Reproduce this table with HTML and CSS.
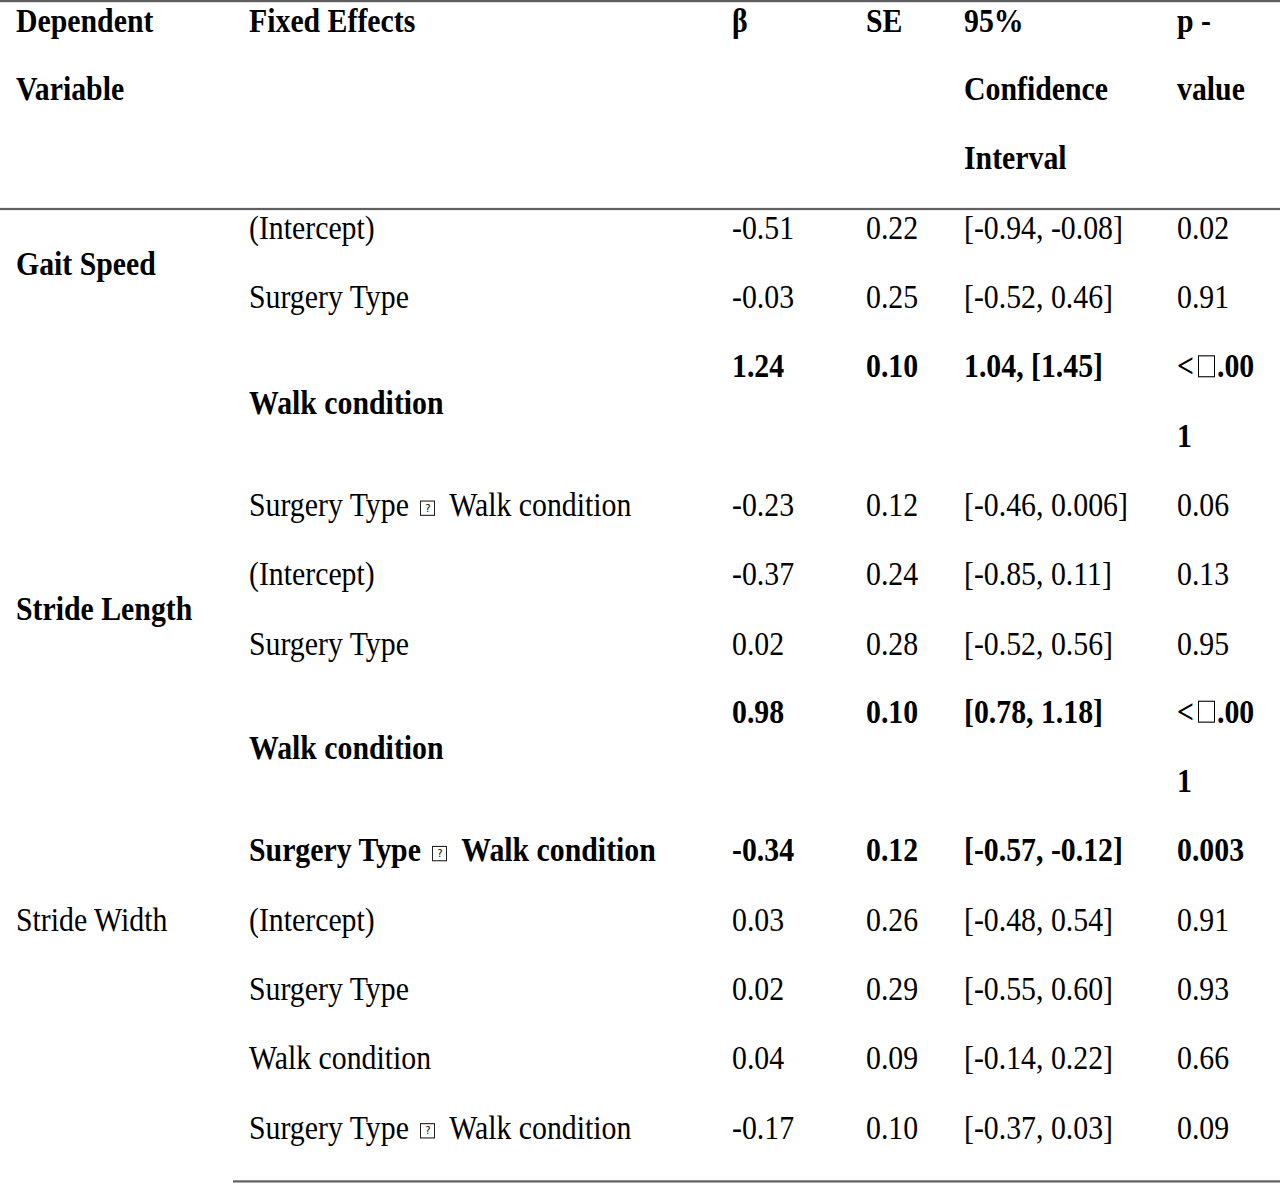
FILE: index.html
```html
<!DOCTYPE html>
<html>
<head>
<meta charset="utf-8">
<link rel="stylesheet" href="styles.css">
</head>
<body>
<div class="page">
<table class="stats">
  <colgroup>
    <col class="c-dep"><col class="c-fix"><col class="c-beta"><col class="c-se"><col class="c-ci"><col class="c-p">
  </colgroup>
  <thead>
    <tr>
      <th><div class="in">Dependent<br>Variable</div></th>
      <th><div class="in">Fixed Effects</div></th>
      <th><div class="in">β</div></th>
      <th><div class="in">SE</div></th>
      <th><div class="in">95%<br>Confidence<br>Interval</div></th>
      <th><div class="in">p -<br>value</div></th>
    </tr>
  </thead>
  <tbody>
    <tr>
      <td rowspan="2" class="mid b"><div class="in">Gait Speed</div></td>
      <td><div class="in">(Intercept)</div></td>
      <td><div class="in">-0.51</div></td>
      <td><div class="in">0.22</div></td>
      <td><div class="in">[-0.94, -0.08]</div></td>
      <td><div class="in">0.02</div></td>
    </tr>
    <tr>
      <td><div class="in">Surgery Type</div></td>
      <td><div class="in">-0.03</div></td>
      <td><div class="in">0.25</div></td>
      <td><div class="in">[-0.52, 0.46]</div></td>
      <td><div class="in">0.91</div></td>
    </tr>
    <tr class="b">
      <td></td>
      <td class="mid"><div class="in">Walk condition</div></td>
      <td><div class="in">1.24</div></td>
      <td><div class="in">0.10</div></td>
      <td><div class="in">1.04, [1.45]</div></td>
      <td><div class="in">&lt;<span class="sq"></span>.00<br>1</div></td>
    </tr>
    <tr>
      <td></td>
      <td><div class="in">Surgery Type <span class="qbox">?</span> Walk condition</div></td>
      <td><div class="in">-0.23</div></td>
      <td><div class="in">0.12</div></td>
      <td><div class="in">[-0.46, 0.006]</div></td>
      <td><div class="in">0.06</div></td>
    </tr>
    <tr>
      <td rowspan="2" class="mid b"><div class="in">Stride Length</div></td>
      <td><div class="in">(Intercept)</div></td>
      <td><div class="in">-0.37</div></td>
      <td><div class="in">0.24</div></td>
      <td><div class="in">[-0.85, 0.11]</div></td>
      <td><div class="in">0.13</div></td>
    </tr>
    <tr>
      <td><div class="in">Surgery Type</div></td>
      <td><div class="in">0.02</div></td>
      <td><div class="in">0.28</div></td>
      <td><div class="in">[-0.52, 0.56]</div></td>
      <td><div class="in">0.95</div></td>
    </tr>
    <tr class="b">
      <td></td>
      <td class="mid"><div class="in">Walk condition</div></td>
      <td><div class="in">0.98</div></td>
      <td><div class="in">0.10</div></td>
      <td><div class="in">[0.78, 1.18]</div></td>
      <td><div class="in">&lt;<span class="sq"></span>.00<br>1</div></td>
    </tr>
    <tr class="b">
      <td></td>
      <td><div class="in">Surgery Type <span class="qbox">?</span> Walk condition</div></td>
      <td><div class="in">-0.34</div></td>
      <td><div class="in">0.12</div></td>
      <td><div class="in">[-0.57, -0.12]</div></td>
      <td><div class="in">0.003</div></td>
    </tr>
    <tr>
      <td><div class="in">Stride Width</div></td>
      <td><div class="in">(Intercept)</div></td>
      <td><div class="in">0.03</div></td>
      <td><div class="in">0.26</div></td>
      <td><div class="in">[-0.48, 0.54]</div></td>
      <td><div class="in">0.91</div></td>
    </tr>
    <tr>
      <td></td>
      <td><div class="in">Surgery Type</div></td>
      <td><div class="in">0.02</div></td>
      <td><div class="in">0.29</div></td>
      <td><div class="in">[-0.55, 0.60]</div></td>
      <td><div class="in">0.93</div></td>
    </tr>
    <tr>
      <td></td>
      <td><div class="in">Walk condition</div></td>
      <td><div class="in">0.04</div></td>
      <td><div class="in">0.09</div></td>
      <td><div class="in">[-0.14, 0.22]</div></td>
      <td><div class="in">0.66</div></td>
    </tr>
    <tr class="last">
      <td></td>
      <td><div class="in">Surgery Type <span class="qbox">?</span> Walk condition</div></td>
      <td><div class="in">-0.17</div></td>
      <td><div class="in">0.10</div></td>
      <td><div class="in">[-0.37, 0.03]</div></td>
      <td><div class="in">0.09</div></td>
    </tr>
  </tbody>
</table>
</div>
</body>
</html>
```

FILE: styles.css
```css
html, body {
  margin: 0;
  padding: 0;
  background: #ffffff;
}

body {
  font-family: "Liberation Serif", "Times New Roman", serif;
  font-size: 29.8px;
  color: #000000;
}

.page {
  width: 1280px;
  height: 1185px;
  overflow: hidden;
}

/* the source document is rendered slightly stretched vertically */
.stats {
  width: 1280px;
  border-collapse: collapse;
  table-layout: fixed;
  transform: scaleY(1.1);
  transform-origin: 0 0;
}

.c-dep { width: 233px; }
.c-fix { width: 483px; }
.c-beta { width: 134px; }
.c-se { width: 98px; }
.c-ci { width: 213px; }
.c-p { width: 119px; }

.stats th,
.stats td {
  padding: 0 0 0 16px;
  vertical-align: top;
  text-align: left;
  white-space: nowrap;
  line-height: 62.94px;
}

.stats th {
  font-weight: bold;
  line-height: 62.4px;
}

.stats thead tr {
  border-top: 2px solid #5f5f5f;
  border-bottom: 2px solid #5f5f5f;
}

.stats td.mid {
  vertical-align: middle;
}

.stats .b,
.stats .b td {
  font-weight: bold;
}

.in {
  margin-top: -15.3px;
  margin-bottom: 15.3px;
}

.stats td.mid .in {
  margin-top: -14px;
  margin-bottom: 14px;
}

.stats th .in {
  margin-top: -14.1px;
  margin-bottom: 14.1px;
}

.stats tr.last td {
  border-bottom: 2px solid #5f5f5f;
  padding-bottom: 1px;
}

.stats tr.last td:first-child {
  border-bottom: none;
}

.qbox {
  display: inline-block;
  width: 15px;
  height: 14px;
  margin: 0 7px 0 4px;
  border: 1px solid #222;
  box-sizing: border-box;
  overflow: hidden;
  vertical-align: baseline;
  font-family: "DejaVu Sans", sans-serif;
  font-size: 10px;
  line-height: 12px;
  text-align: center;
  font-weight: normal;
}

.sq {
  display: inline-block;
  width: 17px;
  height: 20px;
  margin: 0 2px 0 4px;
  border: 1px solid #000;
  box-sizing: border-box;
  overflow: hidden;
  vertical-align: baseline;
}
```
